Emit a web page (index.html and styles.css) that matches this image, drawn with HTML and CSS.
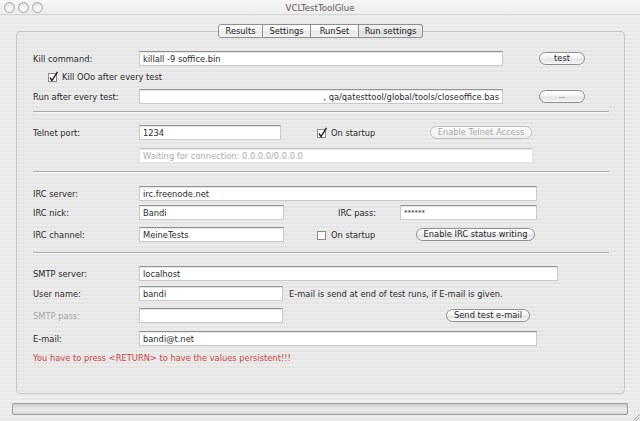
FILE: index.html
```html
<!DOCTYPE html>
<html>
<head>
<meta charset="utf-8">
<title>VCLTestToolGlue</title>
<link rel="stylesheet" href="styles.css">
</head>
<body>
<div class="window">
  <div class="titlebar">
    <div class="lights">
      <span class="light"></span><span class="light"></span><span class="light"></span>
    </div>
    <div class="title">VCLTestToolGlue</div>
    <div></div>
  </div>

  <div class="tabbar">
    <div class="tab tab-first">Results</div>
    <div class="tab tab-w48">Settings</div>
    <div class="tab tab-w48">RunSet</div>
    <div class="tab tab-last tab-selected">Run settings</div>
  </div>

  <div class="panel">
    <div class="row r1">
      <span class="label">Kill command:</span>
      <input class="field w364" type="text" value="killall -9 soffice.bin">
      <button class="btn btn-small">test</button>
    </div>
    <div class="row r2 check-row">
      <span class="check"><svg width="11" height="12" viewBox="0 0 11 12"><rect x="0.5" y="2.5" width="8" height="8" fill="#fff" stroke="#8a8a8a"/><path d="M2 6.5 L4 9.5 L9.5 0.8" fill="none" stroke="#1e1e1e" stroke-width="1.4"/></svg></span>
      <span>Kill OOo after every test</span>
    </div>
    <div class="row r3">
      <span class="label">Run after every test:</span>
      <input class="field w364 right" type="text" value=", qa/qatesttool/global/tools/closeoffice.bas">
      <button class="btn btn-small btn-dots">...</button>
    </div>
    <div class="sep s1"></div>

    <div class="row r4">
      <span class="label">Telnet port:</span>
      <input class="field w142" type="text" value="1234">
      <span class="opt opt-telnet">
        <span class="check"><svg width="11" height="12" viewBox="0 0 11 12"><rect x="0.5" y="2.5" width="8" height="8" fill="#fff" stroke="#8a8a8a"/><path d="M2 6.5 L4 9.5 L9.5 0.8" fill="none" stroke="#1e1e1e" stroke-width="1.4"/></svg></span>
        <span>On startup</span>
      </span>
      <button class="btn btn-disabled w102" disabled>Enable Telnet Access</button>
    </div>
    <div class="row r5">
      <span class="label"></span>
      <input class="field w394 dim" type="text" value="Waiting for connection: 0.0.0.0/0.0.0.0">
    </div>
    <div class="sep s2"></div>

    <div class="row r6">
      <span class="label">IRC server:</span>
      <input class="field w398" type="text" value="irc.freenode.net">
    </div>
    <div class="row r7">
      <span class="label">IRC nick:</span>
      <input class="field w145" type="text" value="Bandi">
      <span class="label-pass">IRC pass:</span>
      <input class="field w137 pass" type="text" value="******">
    </div>
    <div class="row r8">
      <span class="label">IRC channel:</span>
      <input class="field w145" type="text" value="MeineTests">
      <span class="opt opt-irc">
        <span class="check"><svg width="11" height="12" viewBox="0 0 11 12"><rect x="0.5" y="2.5" width="8" height="8" fill="#fff" stroke="#8a8a8a"/></svg></span>
        <span>On startup</span>
      </span>
      <button class="btn w119">Enable IRC status writing</button>
    </div>
    <div class="sep s3"></div>

    <div class="row r9">
      <span class="label">SMTP server:</span>
      <input class="field w419" type="text" value="localhost">
    </div>
    <div class="row r10">
      <span class="label">User name:</span>
      <input class="field w144" type="text" value="bandi">
      <span class="note">E-mail is send at end of test runs, if E-mail is given.</span>
    </div>
    <div class="row r11">
      <span class="label label-dim">SMTP pass:</span>
      <input class="field w144" type="text" value="">
      <button class="btn btn-send">Send test e-mail</button>
    </div>
    <div class="row r12">
      <span class="label">E-mail:</span>
      <input class="field w398" type="text" value="bandi@t.net">
    </div>
    <div class="row r13 warn">You have to press &lt;RETURN&gt; to have the values persistent!!!</div>
  </div>

  <div class="bottom">
    <div class="track"></div>
    <div class="grip">
      <svg width="8" height="8" viewBox="0 0 8 8"><path d="M7.5 1.5 L1.5 7.5 M7.5 4.5 L4.5 7.5" stroke="#9a9a9a" stroke-width="1"/></svg>
    </div>
  </div>
</div>
</body>
</html>
```

FILE: styles.css
```css
* { box-sizing: border-box; }

html, body {
  margin: 0;
  padding: 0;
}

body {
  font-family: "DejaVu Sans", "Liberation Sans", sans-serif;
  font-size: 8.3px;
  color: #2a2a2a;
}

.window {
  width: 640px;
  height: 421px;
  overflow: hidden;
  background: repeating-linear-gradient(to bottom, #efefef 0, #efefef 2px, #e8e8e8 2px, #e8e8e8 4px);
  display: flex;
  flex-direction: column;
}

/* title bar */
.titlebar {
  height: 15px;
  display: grid;
  grid-template-columns: 1fr auto 1fr;
  align-items: center;
  background: linear-gradient(to bottom, #f6f6f6, #ececec);
  border-bottom: 1px solid #d6d6d6;
}

.lights {
  display: flex;
  gap: 3px;
  padding-left: 4px;
  align-items: center;
}

.light {
  width: 11px;
  height: 11px;
  border-radius: 50%;
  border: 1px solid #a8a8a8;
  background: radial-gradient(circle at 50% 70%, #ffffff 0, #f0f0f0 45%, #d4d4d4 100%);
}

.title {
  color: #5a5a5a;
  font-size: 8.6px;
  padding-top: 1px;
}

/* tabs */
.tabbar {
  display: flex;
  justify-content: center;
  margin-top: 9px;
  margin-left: 1px;
  height: 14px;
  position: relative;
  z-index: 1;
}

.tab {
  height: 14px;
  width: 48px;
  display: flex;
  align-items: center;
  justify-content: center;
  border: 1px solid #909090;
  border-left: none;
  background: linear-gradient(to bottom, #ffffff 0, #f4f4f4 50%, #e8e8e8 51%, #f3f3f3 100%);
  color: #222;
}

.tab-first {
  width: 45px;
  border-left: 1px solid #909090;
  border-radius: 3px 0 0 3px;
}

.tab-w48 { width: 48px; }

.tab-last {
  width: 64px;
  border-radius: 0 3px 3px 0;
}

.tab-selected {
  background: linear-gradient(to bottom, #f2f2f2 0, #e8e8e8 50%, #dcdcdc 51%, #e8e8e8 100%);
}

/* panel */
.panel {
  margin-top: -7px;
  margin-left: 16px;
  width: 609px;
  height: 363px;
  border: 1px solid #c6c6c6;
  border-radius: 4px;
  background: rgba(0, 0, 0, 0.012);
  padding: 19px 15px 0 16px;
  display: flex;
  flex-direction: column;
}

.row {
  display: flex;
  align-items: center;
  height: 15px;
  flex: none;
}

.r2 { margin-top: 5px; height: 12px; }
.r3 { margin-top: 6px; }
.r4 { margin-top: 13px; }
.r5 { margin-top: 8px; }
.r6 { margin-top: 14px; }
.r7 { margin-top: 4px; }
.r8 { margin-top: 7px; }
.r9 { margin-top: 13px; }
.r10 { margin-top: 5px; }
.r11 { margin-top: 7px; }
.r12 { margin-top: 8px; }
.r13 { margin-top: 6px; height: 12px; }

.sep {
  height: 1px;
  background: #ababab;
  flex: none;
  box-shadow: 0 1px 0 #f7f7f7;
}
.s1 { margin-top: 7px; }
.s2 { margin-top: 8px; }
.s3 { margin-top: 10px; }

.label {
  width: 106px;
  flex: none;
}

.label-dim { color: #a6a6a6; }

.label-pass {
  margin-left: 54px;
  width: 62px;
  flex: none;
}

.field {
  height: 15px;
  flex: none;
  border: 1px solid #c8c8c8;
  border-top-color: #939393;
  background: #ffffff;
  font-family: "DejaVu Sans", "Liberation Sans", sans-serif;
  font-size: 8.3px;
  color: #2a2a2a;
  padding: 0 3px;
  margin: 0;
  outline: none;
  box-shadow: inset 0 1px 0 #e6e6e6;
}

.field.right { text-align: right; }
.field.dim { color: #ababab; border-color: #e4e4e4; border-top-color: #c8c8c8; }
.field.pass { font-size: 7px; }

.w364 { width: 364px; }
.w142 { width: 142px; }
.w394 { width: 394px; }
.w398 { width: 398px; }
.w145 { width: 145px; }
.w137 { width: 137px; }
.w419 { width: 419px; }
.w144 { width: 144px; }

.btn {
  height: 13px;
  flex: none;
  padding: 0;
  border: 1px solid #8e8e8e;
  border-radius: 7px;
  background: linear-gradient(to bottom, #ffffff 0, #f3f3f3 45%, #e3e3e3 55%, #f7f7f7 100%);
  font-family: "DejaVu Sans", "Liberation Sans", sans-serif;
  font-size: 8.3px;
  color: #2a2a2a;
  line-height: 11px;
}

.btn-small {
  width: 46px;
  margin-left: 36px;
}

.btn-dots { font-size: 7px; color: #555; }

.btn-disabled {
  color: #a8a8a8;
  border-color: #bfbfbf;
  background: linear-gradient(to bottom, #fbfbfb, #efefef);
}

.w102 { width: 102px; }
.w119 { width: 119px; }

.btn-send {
  width: 84px;
  margin-left: 163px;
}

.check-row { padding-left: 15px; }

.check {
  width: 11px;
  height: 12px;
  flex: none;
  display: inline-flex;
  margin-right: 3px;
}

.check svg { display: block; }

.opt {
  display: flex;
  align-items: center;
  flex: none;
}

.opt-telnet {
  margin-left: 36px;
  width: 113px;
}

.opt-irc {
  margin-left: 33px;
  width: 99px;
}

.note {
  margin-left: 6px;
}

.warn {
  color: #cc4444;
}

/* bottom bar */
.bottom {
  margin-top: 9px;
  display: flex;
  align-items: flex-start;
  padding-left: 12px;
  flex: 1;
}

.track {
  width: 616px;
  height: 12px;
  border: 1px solid #a0a0a0;
  border-radius: 2px;
  background: linear-gradient(to bottom, #cbcbcb 0, #dedede 30%, #eaeaea 60%, #d8d8d8 100%);
}

.grip {
  margin-left: 4px;
  margin-top: 10px;
  width: 8px;
  height: 8px;
}

.grip svg { display: block; }
```
